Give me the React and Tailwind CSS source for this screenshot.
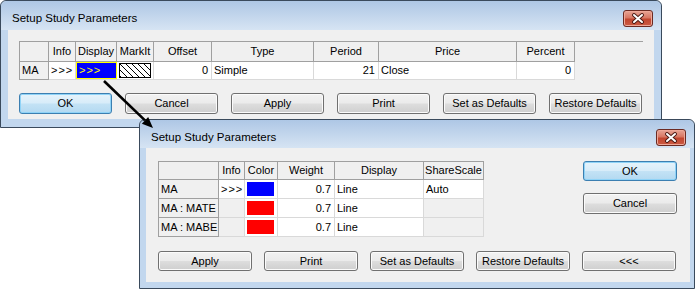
import React from 'react';

const btnBase =
  'flex items-center justify-center rounded-[3px] border text-[11px] leading-none';
const btnNormal =
  'border-[#707070] bg-[linear-gradient(to_bottom,#f2f2f2_0%,#ebebeb_48%,#dddddd_52%,#cfcfcf_100%)] shadow-[inset_0_0_0_1px_#fbfbfb]';
const btnFocus =
  'border-[#3c7fb1] bg-[linear-gradient(to_bottom,#e6f3fb_0%,#d7ecf9_48%,#c3e2f5_52%,#b3d9f1_100%)] shadow-[inset_0_0_0_1px_#8fd3f7]';

function Btn({ children, size, focus }) {
  return (
    <div className={`${btnBase} ${size} ${focus ? btnFocus : btnNormal}`}>
      {children}
    </div>
  );
}

function CloseBtn() {
  return (
    <div className="flex h-[17px] w-[30px] items-center justify-center rounded-[3px] border border-[#6b2a22] bg-[linear-gradient(to_bottom,#e8a596_0%,#d87763_45%,#c2462f_55%,#cb5b44_100%)] shadow-[inset_0_0_0_1px_#eea898]">
      <svg width="14" height="11" viewBox="0 0 14 11">
        <path d="M3 2 L11 9 M11 2 L3 9" stroke="#4a1a14" strokeWidth="3.8" strokeLinecap="round" />
        <path d="M3 2 L11 9 M11 2 L3 9" stroke="#ffffff" strokeWidth="2" strokeLinecap="round" />
      </svg>
    </div>
  );
}

function Hatch() {
  return (
    <svg width="32" height="15" viewBox="0 0 32 15" className="ml-[2px]">
      <defs>
        <clipPath id="hc">
          <rect x="1" y="1" width="30" height="13" />
        </clipPath>
      </defs>
      <g clipPath="url(#hc)" stroke="#000" strokeWidth="1">
        {[-12, -6, 0, 6, 12, 18, 24, 30].map((x) => (
          <line key={x} x1={x} y1="0" x2={x + 15} y2="15" />
        ))}
      </g>
      <rect x="0.5" y="0.5" width="31" height="14" fill="none" stroke="#000" />
    </svg>
  );
}

// back window table
const w1Cols = ['w-[29px]', 'w-[27px]', 'w-[41px]', 'w-[37px]', 'w-[58px]', 'w-[102px]', 'w-[65px]', 'w-[138px]', 'w-[58px]'];
const w1Head = ['', 'Info', 'Display', 'MarkIt', 'Offset', 'Type', 'Period', 'Price', 'Percent'];

function StudyTable() {
  const cell = 'h-[18px] flex items-center border-r border-b border-[#d9d9d9] bg-white';
  return (
    <div className="inline-flex flex-col border-l border-t border-[#a0a0a0]">
      <div className="flex">
        {w1Head.map((h, i) => (
          <div
            key={i}
            className={`${w1Cols[i]} flex h-[20px] items-center justify-center border-r border-b border-[#a0a0a0] bg-[#f0f0f0]`}
          >
            {h}
          </div>
        ))}
      </div>
      <div className="flex">
        <div className="flex h-[18px] w-[29px] items-center border-r border-b border-[#a0a0a0] bg-[#f0f0f0] pl-[2px]">MA</div>
        <div className={`${cell} w-[27px] pl-[2px] tracking-[1px]`}>&gt;&gt;&gt;</div>
        <div className="flex h-[18px] w-[41px] items-center border-b border-[#d9d9d9] bg-[#0000ff] pl-[3px] tracking-[1px] text-[#ffff00] shadow-[inset_0_0_0_1px_#ffff00]">&gt;&gt;&gt;</div>
        <div className={`${cell} w-[37px]`}>
          <Hatch />
        </div>
        <div className={`${cell} w-[58px] justify-end pr-[3px]`}>0</div>
        <div className={`${cell} w-[102px] pl-[2px]`}>Simple</div>
        <div className={`${cell} w-[65px] justify-end pr-[3px]`}>21</div>
        <div className={`${cell} w-[138px] pl-[2px]`}>Close</div>
        <div className={`${cell} w-[58px] justify-end pr-[3px]`}>0</div>
      </div>
    </div>
  );
}

// front window table
const w2Cols = ['w-[60px]', 'w-[26px]', 'w-[33px]', 'w-[57px]', 'w-[89px]', 'w-[60px]'];
const w2Head = ['', 'Info', 'Color', 'Weight', 'Display', 'ShareScale'];
const w2Rows = [
  { name: 'MA', info: '>>>', color: 'bg-[#0000ff]', weight: '0.7', display: 'Line', share: 'Auto' },
  { name: 'MA : MATE', info: null, color: 'bg-[#ff0000]', weight: '0.7', display: 'Line', share: null },
  { name: 'MA : MABE', info: null, color: 'bg-[#ff0000]', weight: '0.7', display: 'Line', share: null },
];

function LineTable() {
  const cell = 'h-[19px] flex items-center border-r border-b border-[#d9d9d9]';
  return (
    <div className="inline-flex flex-col border-l border-t border-[#a0a0a0]">
      <div className="flex">
        {w2Head.map((h, i) => (
          <div
            key={i}
            className={`${w2Cols[i]} flex h-[18px] items-center justify-center border-r border-b border-[#a0a0a0] bg-[#f0f0f0]`}
          >
            {h}
          </div>
        ))}
      </div>
      {w2Rows.map((r) => (
        <div key={r.name} className="flex">
          <div className="flex h-[19px] w-[60px] items-center border-r border-b border-[#a0a0a0] bg-[#f0f0f0] pl-[2px]">{r.name}</div>
          <div className={`${cell} w-[26px] pl-[2px] tracking-[1px] ${r.info ? 'bg-white' : 'bg-[#f0f0f0]'}`}>
            {r.info}
          </div>
          <div className={`${cell} w-[33px] bg-white pl-[2px]`}>
            <div className={`h-[14px] w-[27px] ${r.color}`} />
          </div>
          <div className={`${cell} w-[57px] justify-end bg-white pr-[3px]`}>{r.weight}</div>
          <div className={`${cell} w-[89px] bg-white pl-[2px]`}>{r.display}</div>
          <div className={`${cell} w-[60px] pl-[2px] ${r.share ? 'bg-white' : 'bg-[#f0f0f0]'}`}>
            {r.share}
          </div>
        </div>
      ))}
    </div>
  );
}

export default function App() {
  return (
    <div className="relative h-[290px] w-[695px] overflow-hidden bg-white font-['Liberation_Sans',Arial,sans-serif] text-[11px] text-black">
      {/* back window */}
      <div className="absolute left-0 top-0 flex h-[128px] w-[662px] flex-col rounded-t-[6px] border border-[#3a4a5c] bg-[#c2d7ee]">
        <div className="flex h-[29px] justify-between rounded-t-[6px] bg-[linear-gradient(to_bottom,#aec7e5,#d6e4f3)] pl-[11px] pr-[8px]">
          <span className="pt-[10px] text-[11.5px] leading-[14px]">Setup Study Parameters</span>
          <div className="pt-[9px]">
            <CloseBtn />
          </div>
        </div>
        <div className="mx-[7px] flex h-[89px] flex-col bg-[#f0f0f0] px-[11px] pt-[11px]">
          <StudyTable />
          <div className="mt-[13px] flex gap-[13px]">
            <Btn size="h-[21px] w-[93px]" focus>OK</Btn>
            <Btn size="h-[21px] w-[93px]">Cancel</Btn>
            <Btn size="h-[21px] w-[93px]">Apply</Btn>
            <Btn size="h-[21px] w-[93px]">Print</Btn>
            <Btn size="h-[21px] w-[93px]">Set as Defaults</Btn>
            <Btn size="h-[21px] w-[93px]">Restore Defaults</Btn>
          </div>
        </div>
      </div>

      {/* front window */}
      <div className="absolute left-[139px] top-[119px] flex h-[170px] w-[556px] flex-col rounded-t-[6px] border border-[#3a4a5c] bg-[#c2d7ee]">
        <div className="flex h-[28px] justify-between rounded-t-[6px] bg-[linear-gradient(to_bottom,#aec7e5,#d6e4f3)] pl-[11px] pr-[8px]">
          <span className="pt-[10px] text-[11.5px] leading-[14px]">Setup Study Parameters</span>
          <div className="pt-[9px]">
            <CloseBtn />
          </div>
        </div>
        <div className="ml-[6px] mr-[4px] flex h-[134px] flex-col bg-[#f0f0f0] pl-[12px] pt-[13px]">
          <div className="flex">
            <LineTable />
            <div className="ml-[99px] flex flex-col gap-[12px]">
              <Btn size="h-[20px] w-[94px]" focus>OK</Btn>
              <Btn size="h-[21px] w-[94px]">Cancel</Btn>
            </div>
          </div>
          <div className="mt-[14px] flex gap-[12px]">
            <Btn size="h-[20px] w-[94px]">Apply</Btn>
            <Btn size="h-[20px] w-[94px]">Print</Btn>
            <Btn size="h-[20px] w-[94px]">Set as Defaults</Btn>
            <Btn size="h-[20px] w-[94px]">Restore Defaults</Btn>
            <Btn size="h-[20px] w-[94px]">&lt;&lt;&lt;</Btn>
          </div>
        </div>
      </div>

      {/* annotation arrow */}
      <svg className="pointer-events-none absolute left-0 top-0" width="695" height="290" viewBox="0 0 695 290">
        <line x1="104" y1="81" x2="145" y2="120.4" stroke="#000" strokeWidth="2.6" />
        <polygon points="153,128 141.9,123.7 148.2,117.1" fill="#000" />
      </svg>
    </div>
  );
}
